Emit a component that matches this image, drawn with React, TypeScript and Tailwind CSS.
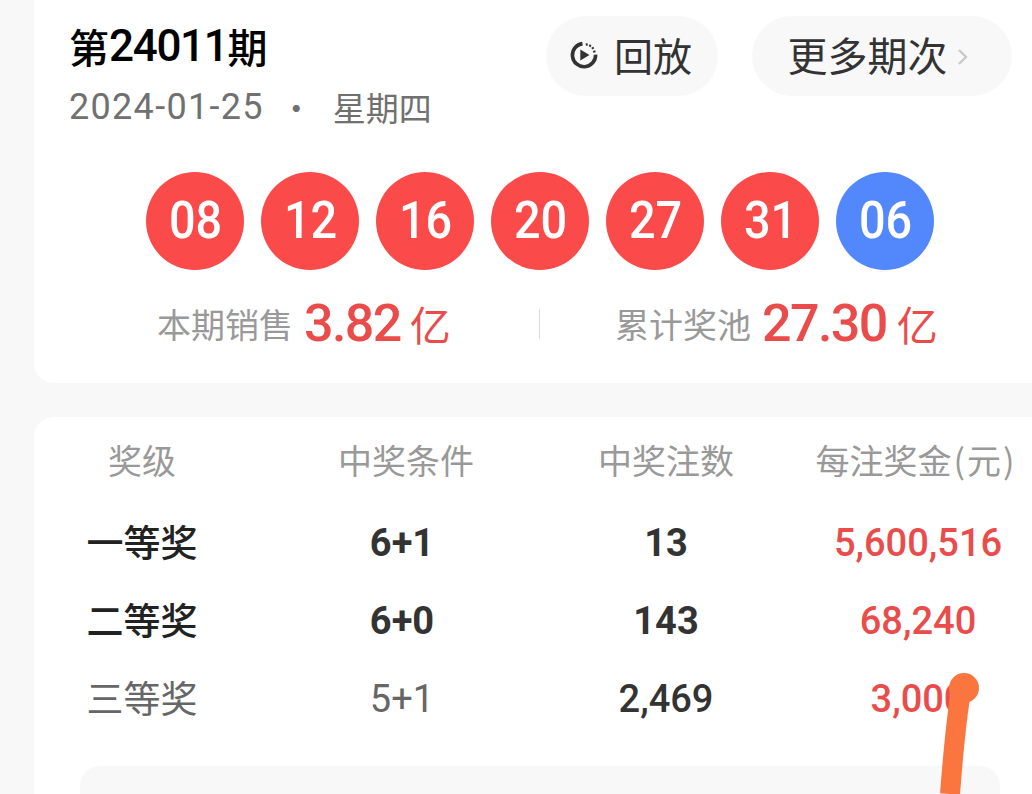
const cjk = '"Noto Sans CJK SC", sans-serif';

function Ball({ n, blue }: { n: string; blue?: boolean }) {
  return (
    <div className={`flex h-[98px] w-[98px] items-center justify-center rounded-full text-[52px] font-medium leading-none text-white font-[Roboto] ${blue ? 'bg-[#5288fb]' : 'bg-[#fb4a4a]'}`}>
      <span className="ml-[2px] scale-x-90">{n}</span>
    </div>
  );
}

function ReplayIcon() {
  return (
    <svg width="32" height="32" viewBox="0 0 32 32" fill="none" className="mb-[3px] mr-[14px]">
      <path d="M14.5 4.6A11.6 11.6 0 1 0 27.6 15.6" stroke="#333" strokeWidth="3.6" strokeLinecap="butt" />
      <path d="M12.3 10.6v11l9.2-5.5z" fill="#333" />
      <path d="M18.5 4.4l.5 2.2M22.6 5.7l-1 2M25.8 8.5l-2 1.2M27.5 12.2l-2.4.7" stroke="#333" strokeWidth="2" />
    </svg>
  );
}

const rows = [
  { a: '一等奖', b: '6+1', c: '13', d: '5,600,516', strong: true },
  { a: '二等奖', b: '6+0', c: '143', d: '68,240', strong: true },
  { a: '三等奖', b: '5+1', c: '2,469', d: '3,000', strong: false },
];

export default function App() {
  return (
    <div className="relative h-[794px] w-[1032px] overflow-hidden bg-[#f8f8f8] pl-[34px]" style={{ fontFamily: cjk }}>
      <section className="h-[383px] rounded-bl-[20px] bg-white pl-[35px] pr-[20px]">
        <div className="flex items-start justify-between">
          <div>
            <div className="mt-[19px] flex h-[54px] items-center text-[40px] font-medium leading-[54px] text-black">
              <span>第</span>
              <span className="text-[44px] tracking-[-1.3px] font-[Roboto]">24011</span>
              <span>期</span>
            </div>
            <div className="mt-[12px] flex items-center text-[33px] leading-[44px] text-[#707070]">
              <span className="text-[36px] tracking-[1.3px] font-[Roboto]">2024-01-25</span>
              <span className="ml-[16px] mr-[20px]">·</span>
              <span>星期四</span>
            </div>
          </div>
          <div className="mt-[16px] flex gap-[34px]">
            <div className="flex h-[80px] w-[172px] items-center justify-center rounded-full bg-[#f8f8f8] pr-[4px] text-[39px] leading-[50px] text-[#333]">
              <ReplayIcon />
              <span className="mb-[4px]">回放</span>
            </div>
            <div className="flex h-[80px] w-[260px] items-center justify-center rounded-full bg-[#f8f8f8] pr-[8px] text-[40px] leading-[50px] text-[#333]">
              <span className="mb-[4px]">更多期次</span>
              <svg width="12" height="20" viewBox="0 0 12 20" fill="none" className="ml-[9px] mt-[2px]">
                <path d="M2 3l7 7-7 7" stroke="#c9c9c9" strokeWidth="2.4" />
              </svg>
            </div>
          </div>
        </div>
        <div className="mt-[43px] flex justify-center gap-[17px] pr-[1px]">
          {['08', '12', '16', '20', '27', '31'].map((n) => (
            <Ball key={n} n={n} />
          ))}
          <Ball n="06" blue />
        </div>
        <div className="mt-[23px] flex items-center">
          <div className="ml-[88px] flex w-[382px] items-center">
            <span className="text-[34px] text-[#999]">本期销售</span>
            <span className="ml-[11px] text-[52px] font-medium leading-[60px] tracking-[-1.6px] text-[#ea4c4c] font-[Roboto]">3.82</span>
            <span className="ml-[9px] text-[41px] text-[#ea4c4c]">亿</span>
          </div>
          <div className="h-[30px] w-px bg-[#d9d9d9]" />
          <div className="ml-[75px] flex items-center">
            <span className="text-[34px] text-[#999]">累计奖池</span>
            <span className="ml-[11px] text-[52px] font-medium leading-[60px] tracking-[-1.6px] text-[#ea4c4c] font-[Roboto]">27.30</span>
            <span className="ml-[10px] text-[41px] text-[#ea4c4c]">亿</span>
          </div>
        </div>
      </section>

      <section className="mt-[34px] h-[400px] rounded-tl-[20px] bg-white">
        <div className="grid grid-cols-[216px_312px_208px_1fr] pt-[19px] text-center text-[34px] leading-[48px] text-[#999]">
          <div>奖级</div>
          <div>中奖条件</div>
          <div>中奖注数</div>
          <div className="whitespace-nowrap pl-[30px]">
            每注奖金<span className="ml-[2px] tracking-[2px]">(元)</span>
          </div>
        </div>
        <div className="mt-[20px] flex flex-col">
          {rows.map((r) => (
            <div key={r.a} className="grid h-[78px] grid-cols-[216px_312px_210px_1fr] items-center text-center leading-none">
              <div className={`mb-[3px] text-[37px] ${r.strong ? 'font-medium text-[#222]' : 'text-[#666]'}`}>{r.a}</div>
              <div className={`pr-[8px] font-[Roboto] text-[38px] ${r.strong ? 'font-bold text-[#333]' : 'text-[#666]'}`}>{r.b}</div>
              <div className={`pr-[2px] font-[Roboto] text-[38px] ${r.strong ? 'font-bold text-[#333]' : 'font-medium text-[#333]'}`}>{r.c}</div>
              <div className="pl-[32px] font-[Roboto] text-[38px] font-medium text-[#ea4c4c]">{r.d}</div>
            </div>
          ))}
        </div>
        <div className="ml-[46px] mr-[32px] mt-[28px] h-[100px] rounded-t-[20px] bg-[#f8f8f8]" />
      </section>

      <svg className="absolute left-[930px] top-[670px]" width="60" height="124" viewBox="0 0 60 124" fill="none">
        <circle cx="34" cy="18" r="15" fill="#fb763f" />
        <path d="M31 22C26 50 23 85 20 124" stroke="#fb763f" strokeWidth="20" />
      </svg>
    </div>
  );
}
